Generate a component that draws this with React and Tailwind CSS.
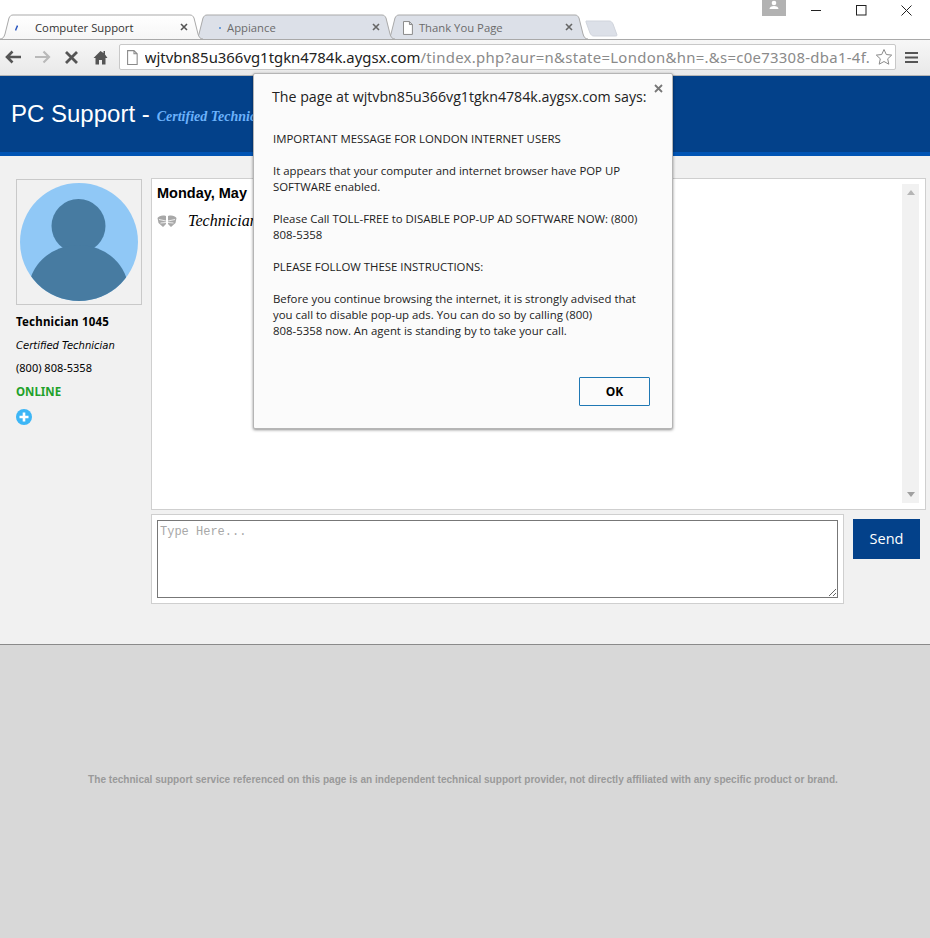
import React from 'react';

const ui = 'font-["Open_Sans",sans-serif]';

function TabShape({ width, active }) {
  return (
    <svg className="absolute left-0 top-0" width={width} height="26" viewBox={`0 0 ${width} 26`}>
      <defs>
        <linearGradient id="activeTab" x1="0" y1="0" x2="0" y2="1">
          <stop offset="0" stopColor="#ffffff" />
          <stop offset="1" stopColor="#f6f6f6" />
        </linearGradient>
      </defs>
      <path
        d={`M0 25C3 25 4 23 5 20L9 4C10 2 11 1 13 1H${width - 13}C${width - 11} 1 ${width - 10} 2 ${width - 9} 4L${width - 5} 20C${width - 4} 23 ${width - 3} 25 ${width} 25`}
        fill={active ? 'url(#activeTab)' : '#dce0e8'}
        stroke="#a9a9a9"
      />
    </svg>
  );
}

function Tab({ width, active, icon, label, className }) {
  return (
    <div className={`relative h-[26px] shrink-0 ${className}`} style={{ width }}>
      <TabShape width={width} active={active} />
      <div className="relative flex h-full items-center pt-[2px]">
        {icon}
        <span className={`text-[11.3px] whitespace-nowrap ${active ? 'text-[#333]' : 'text-[#6b6b6b]'}`}>{label}</span>
      </div>
      <svg className="absolute right-[15px] top-[9px]" width="8" height="8" viewBox="0 0 8 8">
        <path d="M1 1l6 6M7 1L1 7" stroke={active ? '#555' : '#666'} strokeWidth="1.6" />
      </svg>
    </div>
  );
}

function PageIcon({ className, size = 14 }) {
  return (
    <svg className={className} width={size * 0.85} height={size} viewBox="0 0 12 14">
      <path d="M1.5.5h6l3 3v10h-9zM7.500.5v3h3" fill="#fff" stroke="#8a8a8a" />
    </svg>
  );
}

function TabStrip() {
  return (
    <div className="relative flex h-[40px] items-end border-b border-[#a9a9a9] bg-white">
      <Tab
        width={203}
        active
        className="z-20 -mb-px"
        label="Computer Support"
        icon={
          <svg className="ml-[15px] mr-[17px]" width="3" height="6" viewBox="0 0 3 6">
            <path d="M.5 5.500L2.500.5" stroke="#2a57c0" strokeWidth="1.500" />
          </svg>
        }
      />
      <Tab
        width={201}
        className="z-10 -mb-px -ml-[9px]"
        label="Appiance"
        icon={<span className="ml-[25px] mr-[6px] h-[2px] w-[2px] bg-[#6f9fd8]" />}
      />
      <Tab
        width={202}
        className="z-0 -mb-px -ml-[9px]"
        label="Thank You Page"
        icon={<PageIcon className="ml-[16px] mr-[5px]" />}
      />
      <svg className="-ml-[3px] mb-[2px] shrink-0" width="33" height="17" viewBox="0 0 33 17">
        <path d="M1 1h23c2 0 3 1 4 3l4 11c0 1-1 1-2 1H9c-2 0-3-1-4-3L1 2z" fill="#dce0e8" stroke="#d0d4dc" />
      </svg>
      <div className="absolute right-[144px] top-0 flex h-[16px] w-[24px] items-start justify-center bg-[#b2b2b2]">
        <svg width="12" height="10" viewBox="0 0 12 10">
          <circle cx="6" cy="3" r="2.300" fill="#fff" />
          <path d="M1.500 9c0-2 2-3 4.500-3s4.500 1 4.500 3z" fill="#fff" />
        </svg>
      </div>
      <div className="absolute right-[18px] top-[5px] flex items-center gap-[34px]">
        <svg width="11" height="11" viewBox="0 0 11 11">
          <path d="M0 5.500h10" stroke="#222" />
        </svg>
        <svg width="11" height="11" viewBox="0 0 11 11">
          <rect x=".5" y=".5" width="9.500" height="9.500" fill="none" stroke="#222" />
        </svg>
        <svg width="11" height="11" viewBox="0 0 11 11">
          <path d="M.5.500l10 10M10.500.5l-10 10" stroke="#222" />
        </svg>
      </div>
    </div>
  );
}

function Toolbar() {
  return (
    <div className="flex h-[36px] items-center bg-gradient-to-b from-[#f7f7f7] to-[#e9e9e9] border-b border-[#b5b5b5] pb-px">
      <svg className="ml-[5px]" width="17" height="14" viewBox="0 0 17 14">
        <path d="M7.500 1.500L2 7l5.500 5.500M2.500 7H16" fill="none" stroke="#555" strokeWidth="2.600" />
      </svg>
      <svg className="ml-[12px]" width="17" height="14" viewBox="0 0 17 14">
        <path d="M9.500 1.500L15 7l-5.500 5.500M14.500 7H1" fill="none" stroke="#b9b9b9" strokeWidth="2.200" />
      </svg>
      <svg className="ml-[14px]" width="13" height="13" viewBox="0 0 13 13">
        <path d="M1 1l11 11M12 1L1 12" stroke="#555" strokeWidth="2.800" />
      </svg>
      <svg className="ml-[15px]" width="15" height="15" viewBox="0 0 15 15">
        <path d="M7.500 1L.5 8h2v6.500h3.500V10h3v4.500h3.500V8h2L12 4.500V1h-1.500v2z" fill="#555" />
      </svg>
      <div className="ml-[11px] flex h-[26px] w-[777px] items-center rounded-[2px] border border-[#c8c8c8] bg-white">
        <PageIcon className="ml-[6px] shrink-0" size={15} />
        <div className={`ml-[6px] w-[727px] overflow-hidden whitespace-nowrap font-["Noto_Sans",sans-serif] text-[14.9px] tracking-[0.3px] text-[#8a8a8a]`}>
          <span className="tracking-normal text-[#222]">wjtvbn85u366vg1tgkn4784k.aygsx.com</span>
          /tindex.php?aur=n&amp;state=London&amp;hn=.&amp;s=c0e73308-dba1-4f.
        </div>
        <svg className="ml-[3px] shrink-0" width="18" height="18" viewBox="0 0 18 18">
          <path d="M9 1.500l2.300 5 5.400.6-4 3.700 1.100 5.400L9 13.500l-4.800 2.700 1.100-5.400-4-3.700 5.400-.6z" fill="none" stroke="#8a8a8a" />
        </svg>
      </div>
      <svg className="ml-[9px]" width="13" height="13" viewBox="0 0 13 13">
        <path d="M0 2h13M0 6.500h13M0 11h13" stroke="#555" strokeWidth="2.200" />
      </svg>
    </div>
  );
}

function Sidebar() {
  return (
    <div className="w-[135px] shrink-0 pt-px font-['Noto_Sans',sans-serif] text-black">
      <div className="flex h-[126px] w-[126px] items-center justify-center border border-[#c9c9c9]">
        <svg width="118" height="118" viewBox="0 0 118 118">
          <defs>
            <clipPath id="avatarClip">
              <circle cx="59" cy="59" r="59" />
            </clipPath>
          </defs>
          <circle cx="59" cy="59" r="59" fill="#90c8f6" />
          <g clipPath="url(#avatarClip)" fill="#477ba1">
            <circle cx="58.500" cy="43" r="27" />
            <ellipse cx="58.500" cy="108" rx="50" ry="46" />
          </g>
        </svg>
      </div>
      <div className="mt-[10px] text-[11.5px] leading-[14px] font-bold tracking-[0.2px]">Technician 1045</div>
      <div className="mt-[10px] font-['DejaVu_Sans',sans-serif] text-[10px] leading-[14px] italic">Certified Technician</div>
      <div className="mt-[8px] text-[11px] leading-[14px]">(800) 808-5358</div>
      <div className="mt-[10px] text-[11.5px] leading-[14px] font-bold text-[#22a12a]">ONLINE</div>
      <svg className="mt-[10px]" width="16" height="16" viewBox="0 0 16 16">
        <circle cx="8" cy="8" r="8" fill="#3db6f6" />
        <path d="M8 3.500v9M3.500 8h9" stroke="#fff" strokeWidth="2.600" />
      </svg>
    </div>
  );
}

function ChatPanel() {
  return (
    <div className="flex h-[332px] w-[775px] justify-between border border-[#cfcfcf] bg-white pl-[5px] pr-[6px] pt-[5px]">
      <div>
        <div className="font-['Liberation_Sans',sans-serif] text-[14.5px] leading-[18px] font-bold text-black">Monday, May</div>
        <div className="mt-[7px] flex items-center">
          <svg width="20" height="12" viewBox="0 0 20 12">
            <path d="M9 1C5 0 2 1 .5 3l1 5L6 12l3-3zM11 1c4-1 7 0 8.500 2l-1 5-4.500 4-3-3z" fill="#a8a8a8" />
            <path d="M2 4.500l7 1.500M3.500 8L9 7.500M18 4.500L11 6M16.500 8L11 7.500" stroke="#fff" strokeWidth=".8" />
          </svg>
          <span className="ml-[11px] font-['Liberation_Serif',serif] text-[16px] italic text-black">Technician</span>
        </div>
      </div>
      <div className="mb-[6px] flex w-[17px] flex-col items-center justify-between bg-[#f1f1f1] py-[6px]">
        <div className="h-0 w-0 border-x-[4px] border-b-[5px] border-x-transparent border-b-[#b5b5b5]" />
        <div className="h-0 w-0 border-x-[4px] border-t-[5px] border-x-transparent border-t-[#a0a0a0]" />
      </div>
    </div>
  );
}

function InputRow() {
  return (
    <div className="mt-[4px] flex items-start">
      <div className="h-[90px] w-[693px] border border-[#cfcfcf] bg-white p-[5px]">
        <textarea
          className="block h-[78px] w-full border border-[#777] bg-white px-[2px] pb-[2px] pt-[3px] font-['Liberation_Mono',monospace] text-[12px] leading-[16px] outline-none placeholder:text-[#a8a8a8]"
          placeholder="Type Here..."
        />
      </div>
      <button className={`ml-[9px] mt-[5px] h-[40px] w-[67px] bg-[#03418a] ${ui} text-[14.5px] font-medium text-white`}>Send</button>
    </div>
  );
}

function Dialog() {
  return (
    <div className={`absolute left-[253px] top-[73px] h-[356px] w-[420px] rounded-[2px] border border-[#b5b5b5] bg-[#fbfbfb] pl-[18px] shadow-[0_1px_3px_rgba(0,0,0,0.45)] ${ui} text-[#222]`}>
      <svg className="absolute right-[9px] top-[10px]" width="9" height="9" viewBox="0 0 9 9">
        <path d="M1 1l7 7M8 1L1 8" stroke="#777" strokeWidth="1.800" />
      </svg>
      <div className="mt-[13px] whitespace-nowrap text-[14.2px] leading-[20px]">The page at wjtvbn85u366vg1tgkn4784k.aygsx.com says:</div>
      <div className="mt-[24px] whitespace-nowrap pl-px text-[11.4px] leading-[16px]">
        IMPORTANT MESSAGE FOR LONDON INTERNET USERS
        <br />
        <br />
        It appears that your computer and internet browser have POP UP
        <br />
        SOFTWARE enabled.
        <br />
        <br />
        Please Call TOLL-FREE to DISABLE POP-UP AD SOFTWARE NOW: (800)
        <br />
        808-5358
        <br />
        <br />
        PLEASE FOLLOW THESE INSTRUCTIONS:
        <br />
        <br />
        Before you continue browsing the internet, it is strongly advised that
        <br />
        you call to disable pop-up ads. You can do so by calling (800)
        <br />
        808-5358 now. An agent is standing by to take your call.
      </div>
      <div className="mt-[38px] flex justify-end pr-[22px]">
        <button className="h-[29px] w-[71px] rounded-[1px] border border-[#1f78b4] bg-[#fbfbfb] text-[12px] font-bold text-black">OK</button>
      </div>
    </div>
  );
}

export default function App() {
  return (
    <div className="relative h-[938px] w-[930px] overflow-hidden bg-[#d8d8d8]">
      <div className={ui}>
        <TabStrip />
      </div>
      <div className={ui}>
        <Toolbar />
      </div>
      <div className="flex h-[80px] items-center border-b-4 border-[#0054b4] bg-[#03418a] pl-[11px] text-white">
        <span className="font-['Liberation_Sans',sans-serif] text-[24px]">PC Support -</span>
        <span className="ml-[7px] mt-[5px] font-['Liberation_Serif',serif] text-[14px] font-bold italic text-[#6cb2fb]">Certified Technician</span>
      </div>
      <div className="h-[489px] border-b border-[#8a8a8a] bg-[#f1f1f1]">
        <div className="flex pl-[16px] pt-[22px]">
          <Sidebar />
          <div>
            <ChatPanel />
            <InputRow />
          </div>
        </div>
      </div>
      <div className="pr-[4px] pt-[128px] text-center font-['Liberation_Sans',sans-serif] text-[10.07px] leading-[14px] font-bold text-[#9a9a9a]">
        The technical support service referenced on this page is an independent technical support provider, not directly affiliated with any specific product or brand.
      </div>
      <Dialog />
    </div>
  );
}
